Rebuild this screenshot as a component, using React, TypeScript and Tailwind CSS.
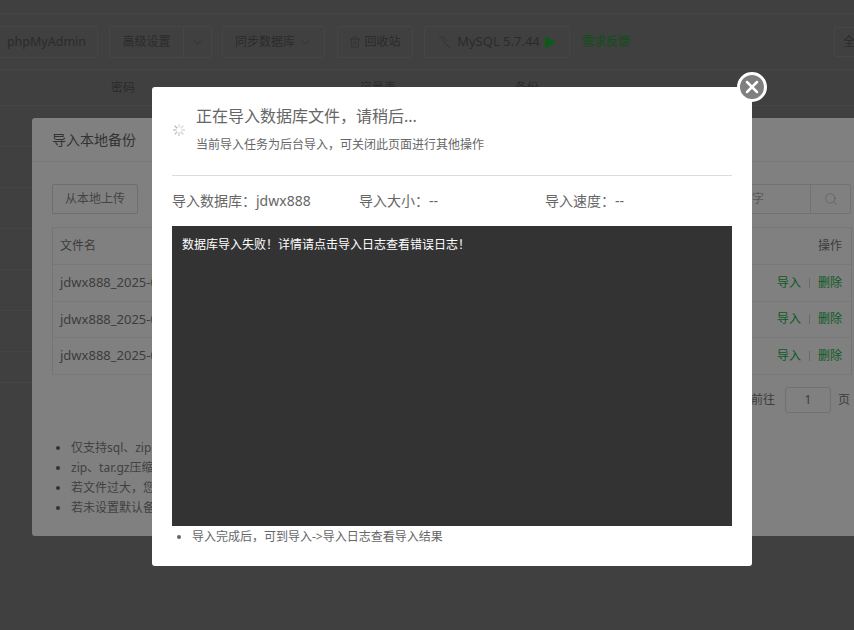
import React from "react";
import { ChevronDown, Trash2, Search, X } from "lucide-react";

const font = "font-['Noto_Sans','Noto_Sans_CJK_SC',sans-serif]";

const notes = ["仅支持sql、zip", "zip、tar.gz压缩", "若文件过大，您", "若未设置默认备"];
const rows = ["jdwx888_2025-0", "jdwx888_2025-0", "jdwx888_2025-0"];
const bgRows = [0, 1, 2, 3, 4, 5, 6];

// little loading spinner, faded spokes
const Spinner = () => (
  <svg width="14" height="14" viewBox="0 0 14 14" className="shrink-0 -mt-[2px]">
    {[0, 45, 90, 135, 180, 225, 270, 315].map((a, i) => (
      <line
        key={a}
        x1="7"
        y1="1"
        x2="7"
        y2="4.500"
        stroke="#aaa"
        strokeWidth="1.3"
        opacity={0.4 + i * 0.06}
        transform={`rotate(${a} 7 7)`}
      />
    ))}
  </svg>
);

const Toolbar = () => (
  <div className="flex items-center h-[32px] -ml-[5px] text-[12px] text-[#2b2b2b]">
    <div className="h-[32px] w-[103px] flex items-center justify-center border border-[#464646] rounded-[2px] text-[12.5px]">
      phpMyAdmin
    </div>
    <div className="ml-[11px] h-[32px] w-[103px] flex items-center border border-[#464646] rounded-[2px]">
      <span className="w-[73px] text-center">高级设置</span>
      <span className="h-full flex-1 flex items-center justify-center border-l border-[#464646]">
        <ChevronDown size={13} strokeWidth={1.2} />
      </span>
    </div>
    <div className="ml-[10px] h-[32px] w-[103px] flex items-center justify-center gap-[4px] border border-[#464646] rounded-[2px]">
      同步数据库
      <ChevronDown size={13} strokeWidth={1.2} />
    </div>
    <div className="ml-[12px] h-[32px] w-[76px] flex items-center justify-center gap-[3px] border border-[#464646] rounded-[2px]">
      <Trash2 size={12} strokeWidth={1.2} />
      回收站
    </div>
    <div className="ml-[11px] h-[32px] w-[146px] flex items-center justify-center gap-[5px] border border-[#464646] rounded-[2px] text-[13px]">
      <svg width="14" height="14" viewBox="0 0 14 14" fill="none" stroke="#333" strokeWidth="1">
        <path d="M1 2c1 0 3 1 5 4s4 6 6 7M4 1c2 1 4 3 5 5" />
      </svg>
      MySQL 5.7.44
      <svg width="11" height="13" viewBox="0 0 11 13">
        <polygon points="0,0 11,6.500 0,13" fill="#0f5a18" />
      </svg>
    </div>
    <span className="ml-[12px] text-[#0f4f17]">需求反馈</span>
    <div className="ml-auto -mr-[40px] h-[30px] w-[60px] pl-[8px] flex items-center border border-[#464646] rounded-[2px]">
      全部
    </div>
  </div>
);

const ImportPanel = () => (
  <div className="absolute left-[32px] top-[118px] w-[850px] h-[418px] bg-[#808080] rounded-[3px] text-[12px] text-[#3c3c3c]">
    <div className="h-[44px] pl-[20px] flex items-center border-b border-[#797979] text-[14px] text-[#333]">
      导入本地备份
    </div>
    <div className="h-[30px] mt-[22px] mx-[20px] flex items-center justify-between">
      <div className="h-[30px] w-[86px] flex items-center justify-center border border-[#6e6e6e] rounded-[2px] text-[#444]">
        从本地上传
      </div>
      <div className="h-[30px] w-[150px] mr-[11px] flex border border-[#727272] rounded-[2px]">
        <span className="flex-1 pl-[50px] flex items-center text-[#595959]">字</span>
        <span className="w-[40px] flex items-center justify-center border-l border-[#727272]">
          <Search size={14} strokeWidth={1} className="text-[#555]" />
        </span>
      </div>
    </div>
    <div className="mt-[13px] ml-[20px] w-[800px] border-l border-r border-t border-[#757575]">
      <div className="h-[37px] px-[7px] flex items-center justify-between border-b border-[#797979]">
        <span>文件名</span>
        <span className="mr-[2px]">操作</span>
      </div>
      {rows.map((name, i) => (
        <div key={i} className="h-[36.5px] px-[7px] flex items-center justify-between border-b border-[#797979] text-[13px]">
          <span>{name}</span>
          <span className="flex items-center text-[12px] text-[#0c5a24] mr-[2px]">
            导入
            <span className="mx-[8px] h-[10px] border-l border-[#6a6a6a]" />
            删除
          </span>
        </div>
      ))}
    </div>
    <div className="mt-[12px] mr-[32px] flex items-center justify-end">
      <span>前往</span>
      <span className="ml-[10px] mr-[7px] w-[46px] h-[26px] flex items-center justify-center border border-[#707070] rounded-[3px]">1</span>
      <span>页</span>
    </div>
    <ul className="mt-[25px] pl-[39px] list-disc text-[#404040] marker:text-[#333]">
      {notes.map((n) => (
        <li key={n} className="h-[20px] leading-[20px]">{n}</li>
      ))}
    </ul>
  </div>
);

const ProgressDialog = () => (
  <div className="absolute left-[152px] top-[87px] w-[600px] h-[479px] bg-white rounded-[3px] px-[20px]">
    <button className="absolute -right-[15px] -top-[15px] w-[30px] h-[30px] rounded-full bg-[#7f7f7f] border-[3px] border-white flex items-center justify-center">
      <X size={20} strokeWidth={3} className="text-white" />
    </button>
    <div className="h-[89px] flex items-center border-b border-[#dcdcdc]">
      <Spinner />
      <div className="ml-[10px] -mt-[4px]">
        <div className="text-[16px] leading-[24px] text-[#666]">正在导入数据库文件，请稍后...</div>
        <div className="mt-[8px] text-[12px] leading-[18px] text-[#666]">当前导入任务为后台导入，可关闭此页面进行其他操作</div>
      </div>
    </div>
    <div className="h-[50px] pb-[2px] flex items-center text-[14px] text-[#666]">
      <span className="w-[187px]">导入数据库：jdwx888</span>
      <span className="w-[186px]">导入大小：--</span>
      <span>导入速度：--</span>
    </div>
    <div className="h-[300px] bg-[#333333] px-[10px] py-[10px] text-[12px] leading-[18px] text-white">
      数据库导入失败！详情请点击导入日志查看错误日志！
    </div>
    <ul className="pl-[20px] mt-[2px] list-disc text-[12px] leading-[18px] text-[#666]">
      <li>导入完成后，可到导入-&gt;导入日志查看导入结果</li>
    </ul>
  </div>
);

export default function App() {
  return (
    <div className={`${font} relative w-[854px] h-[630px] overflow-hidden bg-[#404040]`}>
      <div className="h-[14px] border-b border-[#454545]" />
      <div className="h-[56px] pt-[12px] border-b border-[#454545]">
        <Toolbar />
      </div>
      <div className="h-[36px] pl-[111px] flex items-center border-b border-[#454545] text-[12px] text-[#2b2b2b]">
        <span>密码</span>
        <span className="ml-[225px]">容量表</span>
        <span className="ml-[119px]">备份</span>
      </div>
      {bgRows.map((r) => (
        <div key={r} className={r === 6 ? "h-[31px] border-b border-[#464646]" : "h-[41px] border-b border-[#444444]"} />
      ))}
      <ImportPanel />
      <ProgressDialog />
    </div>
  );
}
